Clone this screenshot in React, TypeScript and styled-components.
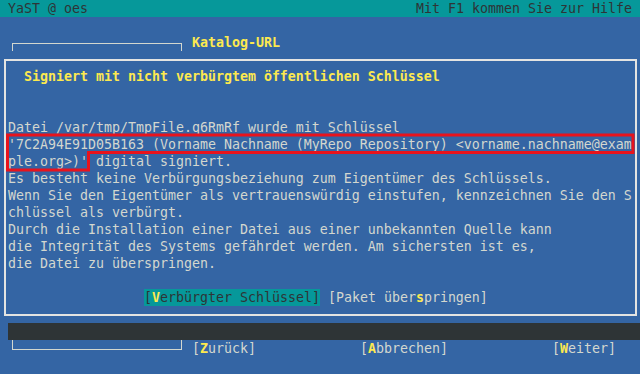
import styled, { createGlobalStyle } from "styled-components";

const GlobalStyle = createGlobalStyle`
  html, body {
    margin: 0;
    padding: 0;
    background: #3465a4;
  }
`;

const Screen = styled.div`
  position: relative;
  width: 640px;
  height: 374px;
  overflow: hidden;
  display: flex;
  flex-direction: column;
  background: #3465a4;
  color: #d3d7cf;
  font-family: "DejaVu Sans Mono", "Liberation Mono", monospace;
  font-size: 13.29px;
  line-height: 17px;
  white-space: pre;
`;

const TopBar = styled.div`
  height: 17px;
  flex: none;
  display: flex;
  justify-content: space-between;
  padding: 0 8px;
  background: #06989a;
  color: #2e3436;
`;

const EmptyRow = styled.div`
  height: 17px;
  flex: none;
`;

const HeaderRow = styled.div`
  height: 17px;
  flex: none;
  display: flex;
  padding-left: 12px;
`;

const FrameTop = styled.div`
  box-sizing: border-box;
  width: 170px;
  height: 8px;
  margin-top: 9px;
  border: 1px solid #d3d7cf;
  border-bottom: none;
`;

const FrameBottom = styled.div`
  box-sizing: border-box;
  width: 170px;
  height: 10px;
  border: 1px solid #d3d7cf;
  border-top: none;
`;

const Title = styled.span<{ $indent?: number }>`
  margin-left: ${(p) => p.$indent ?? 0}px;
  color: #fce94f;
  font-weight: bold;
`;

const Dialog = styled.div`
  box-sizing: border-box;
  flex: none;
  width: 633px;
  height: 257px;
  margin: 8px 0 0 4px;
  padding: 7px 0 0 2px;
  border: 2px solid #e4e4e2;
  display: flex;
  flex-direction: column;
`;

const DialogTitle = styled.div`
  height: 17px;
  padding-left: 16px;
  margin-bottom: 34px;
`;

const TextBlock = styled.div`
  display: flex;
  flex-direction: column;
  margin-bottom: 17px;
`;

const Line = styled.div`
  height: 17px;
`;

const ButtonRow = styled.div`
  height: 17px;
  display: flex;
  padding-left: 136px;
`;

const Button = styled.span<{ $focused?: boolean; $gap?: number }>`
  margin-left: ${(p) => p.$gap ?? 0}px;
  background: ${(p) => (p.$focused ? "#06989a" : "transparent")};
  color: ${(p) => (p.$focused ? "#2e3436" : "#d3d7cf")};
`;

const HotKey = styled.span`
  color: #fce94f;
  font-weight: bold;
`;

const DarkBar = styled.div`
  flex: none;
  height: 17px;
  margin: 7px 0 0 8px;
  background: #2e3436;
`;

const FooterRow = styled.div`
  flex: none;
  height: 17px;
  display: flex;
  padding-left: 12px;
`;

const Marker = styled.svg`
  position: absolute;
  left: 0;
  top: 0;
  pointer-events: none;
`;

const lines = [
  "Datei /var/tmp/TmpFile.q6RmRf wurde mit Schlüssel",
  "'7C2A94E91D05B163 (Vorname Nachname (MyRepo Repository) <vorname.nachname@exam",
  "ple.org>)' digital signiert.",
  "Es besteht keine Verbürgungsbeziehung zum Eigentümer des Schlüssels.",
  "Wenn Sie den Eigentümer als vertrauenswürdig einstufen, kennzeichnen Sie den S",
  "chlüssel als verbürgt.",
  "Durch die Installation einer Datei aus einer unbekannten Quelle kann",
  "die Integrität des Systems gefährdet werden. Am sichersten ist es,",
  "die Datei zu überspringen.",
];

const App = () => {
  return (
    <>
      <GlobalStyle />
      <Screen>
        <TopBar>
          <span>YaST @ oes</span>
          <span>Mit F1 kommen Sie zur Hilfe</span>
        </TopBar>
        <EmptyRow />
        <HeaderRow>
          <FrameTop />
          <Title $indent={10}>Katalog-URL</Title>
        </HeaderRow>
        <Dialog>
          <DialogTitle>
            <Title>Signiert mit nicht verbürgtem öffentlichen Schlüssel</Title>
          </DialogTitle>
          <TextBlock>
            {lines.map((l, i) => (
              <Line key={i}>{l}</Line>
            ))}
          </TextBlock>
          <ButtonRow>
            <Button $focused>
              [<HotKey>V</HotKey>erbürgter Schlüssel]
            </Button>
            <Button $gap={8}>
              [Paket über<HotKey>s</HotKey>pringen]
            </Button>
          </ButtonRow>
        </Dialog>
        <DarkBar />
        <FooterRow>
          <FrameBottom />
          <Button $gap={10}>
            [<HotKey>Z</HotKey>urück]
          </Button>
          <Button $gap={104}>
            [<HotKey>A</HotKey>bbrechen]
          </Button>
          <Button $gap={104}>
            [<HotKey>W</HotKey>eiter]
          </Button>
        </FooterRow>
        <Marker width="640" height="374">
          <path
            d="M7.5 135 H633 V152.5 H88.5 V170 H7.5 Z"
            fill="none"
            stroke="#e8131c"
            strokeWidth="3"
          />
        </Marker>
      </Screen>
    </>
  );
};

export default App;
